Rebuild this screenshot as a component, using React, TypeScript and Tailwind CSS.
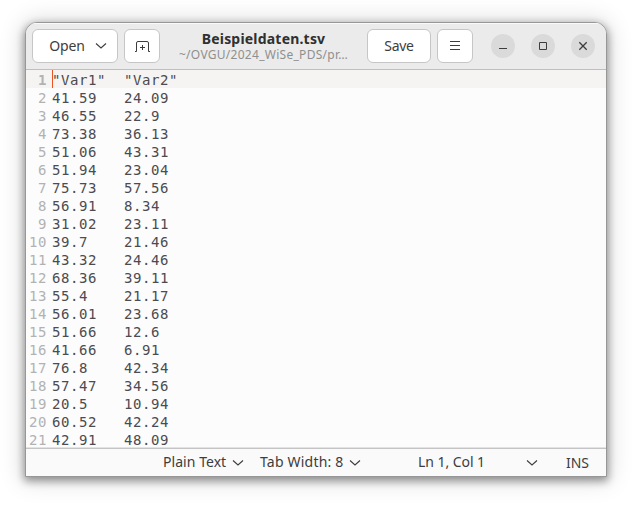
import type { ReactNode } from "react";

const rows: [string, string][] = [
  ['"Var1"', '"Var2"'],
  ["41.59", "24.09"],
  ["46.55", "22.9"],
  ["73.38", "36.13"],
  ["51.06", "43.31"],
  ["51.94", "23.04"],
  ["75.73", "57.56"],
  ["56.91", "8.34"],
  ["31.02", "23.11"],
  ["39.7", "21.46"],
  ["43.32", "24.46"],
  ["68.36", "39.11"],
  ["55.4", "21.17"],
  ["56.01", "23.68"],
  ["51.66", "12.6"],
  ["41.66", "6.91"],
  ["76.8", "42.34"],
  ["57.47", "34.56"],
  ["20.5", "10.94"],
  ["60.52", "42.24"],
  ["42.91", "48.09"],
];

function Chevron() {
  return (
    <svg width="12" height="8" viewBox="0 0 12 8" fill="none" stroke="#3d3d3d" strokeWidth="1.1" className="shrink-0">
      <path d="M1 1.5 6 6l5-4.5" />
    </svg>
  );
}

function HeaderButton({ className, label, children }: { className: string; label: string; children: ReactNode }) {
  return (
    <button
      aria-label={label}
      className={`flex h-[34px] shrink-0 items-center rounded-[6px] border border-[#c6c6c6] bg-white ${className}`}
    >
      {children}
    </button>
  );
}

function WindowControl({ label, children }: { label: string; children: ReactNode }) {
  return (
    <button aria-label={label} className="flex size-6 shrink-0 items-center justify-center rounded-full bg-[#dadada]">
      <svg width="12" height="12" viewBox="0 0 12 12" fill="none" stroke="#3d3d3d">
        {children}
      </svg>
    </button>
  );
}

export default function App() {
  return (
    <div className="h-[505px] w-[632px] overflow-hidden bg-white pt-[22px] pl-[25px] font-['Noto_Sans','Open_Sans',sans-serif] text-[#3d3d3d]">
      <div className="flex h-[455px] w-[582px] flex-col overflow-hidden rounded-t-[12px] border border-[#979797] bg-[#fcfcfc] shadow-[0_3px_9px_1px_rgba(0,0,0,0.4),0_1px_24px_3px_rgba(0,0,0,0.14)]">
        <header className="flex h-[47px] shrink-0 items-center border-b border-[#bfbfbf] bg-[#ebebeb] pl-[6px] shadow-[inset_0_1px_0_#fafafa]">
          <HeaderButton label="Open" className="w-[86px] pl-[16px]">
            <span className="mr-[10px] w-[36px] pb-[2px] text-[14px] tracking-[-0.2px] whitespace-nowrap">Open</span>
            <Chevron />
          </HeaderButton>
          <HeaderButton label="New tab" className="ml-[6px] w-[36px] justify-center">
            <svg width="16" height="14" viewBox="0 0 16 14" fill="none" stroke="#3d3d3d">
              <path d="M1 12.5h1.5V4q0-1.5 1.5-1.5h9q1.5 0 1.5 1.5v8.5H16M8.5 6v5M6 8.5h5" />
            </svg>
          </HeaderButton>
          <div className="flex w-[207px] shrink-0 flex-col items-center whitespace-nowrap">
            <h1 className="text-[14px] leading-[17px] font-bold tracking-[0.2px] text-[#303030]">Beispieldaten.tsv</h1>
            <p className="text-[12px] leading-[15px] tracking-[0.28px] text-[#8f8f8f]">~/OVGU/2024_WiSe_PDS/pr…</p>
          </div>
          <HeaderButton label="Save" className="w-[64px] justify-center">
            <span className="pb-px text-[14px] tracking-[-0.3px]">Save</span>
          </HeaderButton>
          <HeaderButton label="Menu" className="ml-[6px] w-[36px] justify-center">
            <svg width="10" height="10" viewBox="0 0 10 10" stroke="#3d3d3d">
              <path d="M0 .5h10M0 4.5h10M0 8.5h10" />
            </svg>
          </HeaderButton>
          <div className="ml-[18px] flex gap-4">
            <WindowControl label="Minimize">
              <path d="M2 8.5h8" />
            </WindowControl>
            <WindowControl label="Maximize">
              <path d="M2.5 2.5h7v7h-7z" />
            </WindowControl>
            <WindowControl label="Close">
              <path d="m2.3 2.3 7.4 7.4m0-7.4L2.3 9.7" strokeWidth="1.3" />
            </WindowControl>
          </div>
        </header>
        <main className="h-[378px] shrink-0 overflow-hidden bg-[#fcfcfc] font-['DejaVu_Sans_Mono',monospace] text-[14px] leading-[18px] tracking-[0.57px] text-[#4b4b50]">
          {rows.map(([a, b], i) => (
            <div key={i} className={`flex h-[18px] pt-px ${i === 0 ? "bg-[#f5f4f3]" : ""}`}>
              <span className={`w-[21px] shrink-0 text-right text-[#b2b2b2] ${i === 0 ? "font-bold" : ""}`}>{i + 1}</span>
              <span className={`-mt-px ml-[5px] h-[18px] w-px shrink-0 ${i === 0 ? "bg-[#e95420]" : ""}`} />
              <span className="-ml-px w-[72px] shrink-0">{a}</span>
              <span>{b}</span>
            </div>
          ))}
        </main>
        <footer className="flex h-[28px] shrink-0 items-center border-t border-[#c4c4c4] bg-[#fafafa] text-[14px] whitespace-nowrap shadow-[0_-1px_0_#e3e3e3]">
          <span className="ml-[137px] w-[69px] pb-[2px] tracking-[0.05px]">Plain Text</span>
          <Chevron />
          <span className="ml-[16px] w-[89px] pb-[2px] tracking-[0.2px]">Tab Width: 8</span>
          <Chevron />
          <span className="ml-[57px] w-[108px] pb-[2px] tracking-[-0.05px]">Ln 1, Col 1</span>
          <Chevron />
          <span className="ml-[28px] tracking-[-0.1px]">INS</span>
        </footer>
      </div>
    </div>
  );
}
